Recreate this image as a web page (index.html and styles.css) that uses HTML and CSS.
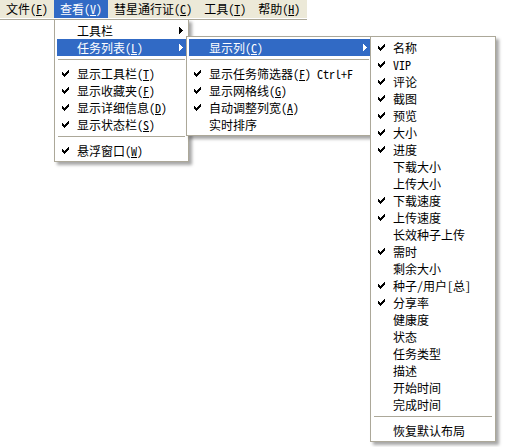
FILE: index.html
```html
<!DOCTYPE html>
<html lang="zh-CN">
<head>
    <meta charset="UTF-8">
    <title>查看菜单</title>
    <link rel="stylesheet" href="styles.css">
</head>
<body>
    <svg class="defs" width="0" height="0">
        <symbol id="chk" viewBox="0 0 7 7">
            <path d="M6 0h1v1h-1zM5 1h2v1h-2zM0 2h1v1h-1zM4 2h3v1h-3zM0 3h2v1h-2zM3 3h3v1h-3zM0 4h5v1h-5zM1 5h3v1h-3zM2 6h1v1h-1z"/>
        </symbol>
        <symbol id="arr" viewBox="0 0 4 7">
            <path d="M0 0h1v7h-1zM1 1h1v5h-1zM2 2h1v3h-1zM3 3h1v1h-1z"/>
        </symbol>
    </svg>

    <div class="menubar">
        <div class="menubar-item">文件(<u>F</u>)</div>
        <div class="menubar-item open">查看(<u>V</u>)</div>
        <div class="menubar-item">彗星通行证(<u>C</u>)</div>
        <div class="menubar-item">工具(<u>T</u>)</div>
        <div class="menubar-item">帮助(<u>H</u>)</div>
    </div>
    <div class="rule"></div>

    <!-- 查看 -->
    <div class="popup popup-view">
        <div class="item"><span class="check"></span><span class="label">工具栏</span><svg class="arrow"><use href="#arr"/></svg></div>
        <div class="item hot"><span class="check"></span><span class="label">任务列表(<u>L</u>)</span><svg class="arrow"><use href="#arr"/></svg></div>
        <div class="sep"></div>
        <div class="item"><span class="check"><svg><use href="#chk"/></svg></span><span class="label">显示工具栏(<u>T</u>)</span></div>
        <div class="item"><span class="check"><svg><use href="#chk"/></svg></span><span class="label">显示收藏夹(<u>F</u>)</span></div>
        <div class="item"><span class="check"><svg><use href="#chk"/></svg></span><span class="label">显示详细信息(<u>D</u>)</span></div>
        <div class="item"><span class="check"><svg><use href="#chk"/></svg></span><span class="label">显示状态栏(<u>S</u>)</span></div>
        <div class="sep"></div>
        <div class="item"><span class="check"><svg><use href="#chk"/></svg></span><span class="label">悬浮窗口(<u>W</u>)</span></div>
    </div>

    <!-- 任务列表 -->
    <div class="popup popup-list">
        <div class="item hot"><span class="check"></span><span class="label">显示列(<u>C</u>)</span><svg class="arrow"><use href="#arr"/></svg></div>
        <div class="sep"></div>
        <div class="item"><span class="check"><svg><use href="#chk"/></svg></span><span class="label">显示任务筛选器(<u>F</u>)</span><span class="key">Ctrl+F</span></div>
        <div class="item"><span class="check"><svg><use href="#chk"/></svg></span><span class="label">显示网格线(<u>G</u>)</span></div>
        <div class="item"><span class="check"><svg><use href="#chk"/></svg></span><span class="label">自动调整列宽(<u>A</u>)</span></div>
        <div class="item"><span class="check"></span><span class="label">实时排序</span></div>
    </div>

    <!-- 显示列 -->
    <div class="popup popup-cols">
        <div class="item"><span class="check"><svg><use href="#chk"/></svg></span><span class="label">名称</span></div>
        <div class="item"><span class="check"><svg><use href="#chk"/></svg></span><span class="label">VIP</span></div>
        <div class="item"><span class="check"><svg><use href="#chk"/></svg></span><span class="label">评论</span></div>
        <div class="item"><span class="check"><svg><use href="#chk"/></svg></span><span class="label">截图</span></div>
        <div class="item"><span class="check"><svg><use href="#chk"/></svg></span><span class="label">预览</span></div>
        <div class="item"><span class="check"><svg><use href="#chk"/></svg></span><span class="label">大小</span></div>
        <div class="item"><span class="check"><svg><use href="#chk"/></svg></span><span class="label">进度</span></div>
        <div class="item"><span class="check"></span><span class="label">下载大小</span></div>
        <div class="item"><span class="check"></span><span class="label">上传大小</span></div>
        <div class="item"><span class="check"><svg><use href="#chk"/></svg></span><span class="label">下载速度</span></div>
        <div class="item"><span class="check"><svg><use href="#chk"/></svg></span><span class="label">上传速度</span></div>
        <div class="item"><span class="check"></span><span class="label">长效种子上传</span></div>
        <div class="item"><span class="check"><svg><use href="#chk"/></svg></span><span class="label">需时</span></div>
        <div class="item"><span class="check"></span><span class="label">剩余大小</span></div>
        <div class="item"><span class="check"><svg><use href="#chk"/></svg></span><span class="label">种子/用户[总]</span></div>
        <div class="item"><span class="check"><svg><use href="#chk"/></svg></span><span class="label">分享率</span></div>
        <div class="item"><span class="check"></span><span class="label">健康度</span></div>
        <div class="item"><span class="check"></span><span class="label">状态</span></div>
        <div class="item"><span class="check"></span><span class="label">任务类型</span></div>
        <div class="item"><span class="check"></span><span class="label">描述</span></div>
        <div class="item"><span class="check"></span><span class="label">开始时间</span></div>
        <div class="item"><span class="check"></span><span class="label">完成时间</span></div>
        <div class="sep"></div>
        <div class="item"><span class="check"></span><span class="label">恢复默认布局</span></div>
    </div>
</body>
</html>
```

FILE: styles.css
```css
body {
    margin: 0;
    background: #fff;
    color: #000;
    font-family: "Noto Sans Mono CJK SC", "Noto Sans CJK SC", sans-serif;
    font-size: 12px;
}
.defs {
    position: absolute;
}
.menubar {
    display: flex;
    width: 307px;
    height: 18px;
    background: #ece9d8;
}
.menubar-item {
    padding: 0 6px;
    line-height: 18px;
    white-space: nowrap;
}
.menubar-item.open {
    background: #316ac5;
    color: #fff;
}
.rule {
    width: 307px;
    height: 1px;
    margin-top: 1px;
    background: #aca899;
}
.popup {
    position: absolute;
    padding: 2px;
    background: #fff;
    border: 1px solid #aca899;
    box-shadow: 3px 3px 3px rgba(0,0,0,0.35);
}
.popup-view { left: 54px; top: 19px; width: 129px; }
.popup-list { left: 186px; top: 36px; width: 181px; }
.popup-cols { left: 370px; top: 36px; width: 120px; }
.item {
    display: flex;
    align-items: center;
    height: 17px;
    line-height: 17px;
    white-space: nowrap;
}
.item.hot {
    background: #316ac5;
    color: #fff;
}
.check {
    flex: none;
    width: 20px;
    padding-left: 5px;
    box-sizing: border-box;
}
.check svg {
    display: block;
    width: 7px;
    height: 7px;
    fill: currentColor;
}
.label {
    flex: 1;
}
.key {
    margin-right: 17px;
}
.arrow {
    flex: none;
    width: 4px;
    height: 7px;
    margin-right: 3px;
    fill: currentColor;
}
.sep {
    height: 1px;
    margin: 3px 1px 5px;
    background: #aca899;
}
```
